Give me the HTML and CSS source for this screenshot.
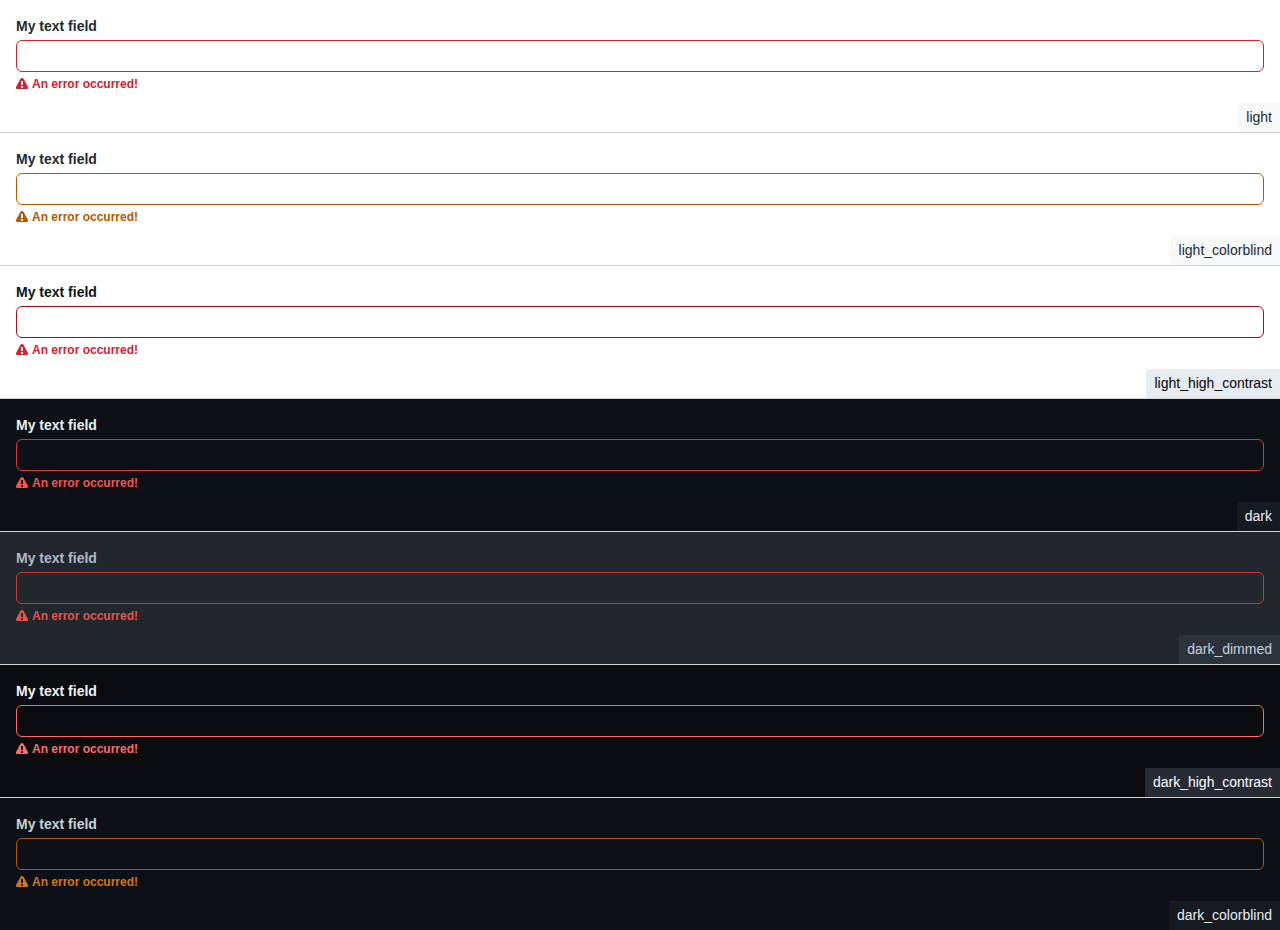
FILE: index.html
```html
<!DOCTYPE html>
<html lang="en">
<head>
<meta charset="utf-8">
<meta name="viewport" content="width=device-width, initial-scale=1">
<title>Text field themes</title>
<link rel="stylesheet" href="styles.css">
</head>
<body>
<svg class="sprite" aria-hidden="true"><symbol id="alert" viewBox="0 0 12 12"><path fill-rule="evenodd" d="M4.4 1C5.1-.2 6.9-.2 7.6 1l4.25 7.8c.55 1.1-.1 2.2-1.2 2.2H1.35C.25 11-.4 9.9.15 8.8ZM5 3v4h2V3Zm0 5v2h2V8Z"/></symbol></svg>
<main>
  <section class="theme light">
    <div class="field">
      <label class="label" for="f1">My text field</label>
      <input class="input" id="f1" type="text" aria-invalid="true" aria-describedby="e1">
      <p class="error" id="e1"><svg class="icon" aria-hidden="true"><use href="#alert"/></svg><span>An error occurred!</span></p>
    </div>
    <div class="tag">light</div>
  </section>
  <section class="theme light-colorblind">
    <div class="field">
      <label class="label" for="f2">My text field</label>
      <input class="input" id="f2" type="text" aria-invalid="true" aria-describedby="e2">
      <p class="error" id="e2"><svg class="icon" aria-hidden="true"><use href="#alert"/></svg><span>An error occurred!</span></p>
    </div>
    <div class="tag">light_colorblind</div>
  </section>
  <section class="theme light-high-contrast">
    <div class="field">
      <label class="label" for="f3">My text field</label>
      <input class="input" id="f3" type="text" aria-invalid="true" aria-describedby="e3">
      <p class="error" id="e3"><svg class="icon" aria-hidden="true"><use href="#alert"/></svg><span>An error occurred!</span></p>
    </div>
    <div class="tag">light_high_contrast</div>
  </section>
  <section class="theme dark">
    <div class="field">
      <label class="label" for="f4">My text field</label>
      <input class="input" id="f4" type="text" aria-invalid="true" aria-describedby="e4">
      <p class="error" id="e4"><svg class="icon" aria-hidden="true"><use href="#alert"/></svg><span>An error occurred!</span></p>
    </div>
    <div class="tag">dark</div>
  </section>
  <section class="theme dark-dimmed">
    <div class="field">
      <label class="label" for="f5">My text field</label>
      <input class="input" id="f5" type="text" aria-invalid="true" aria-describedby="e5">
      <p class="error" id="e5"><svg class="icon" aria-hidden="true"><use href="#alert"/></svg><span>An error occurred!</span></p>
    </div>
    <div class="tag">dark_dimmed</div>
  </section>
  <section class="theme dark-high-contrast">
    <div class="field">
      <label class="label" for="f6">My text field</label>
      <input class="input" id="f6" type="text" aria-invalid="true" aria-describedby="e6">
      <p class="error" id="e6"><svg class="icon" aria-hidden="true"><use href="#alert"/></svg><span>An error occurred!</span></p>
    </div>
    <div class="tag">dark_high_contrast</div>
  </section>
  <section class="theme dark-colorblind">
    <div class="field">
      <label class="label" for="f7">My text field</label>
      <input class="input" id="f7" type="text" aria-invalid="true" aria-describedby="e7">
      <p class="error" id="e7"><svg class="icon" aria-hidden="true"><use href="#alert"/></svg><span>An error occurred!</span></p>
    </div>
    <div class="tag">dark_colorblind</div>
  </section>
</main>
</body>
</html>
```
FILE: styles.css
```css
* {
  box-sizing: border-box;
}

body {
  margin: 0;
  font-family: "Liberation Sans", Arial, sans-serif;
  font-size: 14px;
  line-height: 21px;
}

.sprite {
  display: none;
}

.theme {
  display: flex;
  flex-direction: column;
  background: var(--bg);
  color: var(--fg);
  border-bottom: 1px solid #d3d3d3;
}

.theme:last-child {
  border-bottom: 0;
}

.field {
  display: flex;
  flex-direction: column;
  gap: 4px;
  padding: 16px 16px 11px;
}

.label {
  align-self: flex-start;
  font-weight: 700;
  line-height: 20px;
}

.input {
  width: 100%;
  height: 32px;
  padding: 0 12px;
  border: 1px solid var(--border);
  border-radius: 6px;
  background: var(--bg);
  color: inherit;
  font: inherit;
}

.error {
  display: flex;
  align-items: center;
  gap: 4px;
  margin: 0;
  color: var(--danger);
  font-size: 12px;
  font-weight: 700;
  line-height: 16px;
}

.icon {
  width: 12px;
  height: 12px;
  fill: currentColor;
}

.tag {
  align-self: flex-end;
  padding: 4px 8px;
  background: var(--tag);
  color: var(--tag-fg);
}

.light {
  --bg: #ffffff;
  --fg: #24292f;
  --border: #cf222e;
  --danger: #cf222e;
  --tag: #f6f8fa;
  --tag-fg: #24292f;
}

.light-colorblind {
  --bg: #ffffff;
  --fg: #24292f;
  --border: #b35900;
  --danger: #b35900;
  --tag: #f6f8fa;
  --tag-fg: #24292f;
}

.light-high-contrast {
  --bg: #ffffff;
  --fg: #0e1116;
  --border: #a0111f;
  --danger: #d1242f;
  --tag: #e7ecf0;
  --tag-fg: #010409;
}

.dark {
  --bg: #0d1117;
  --fg: #e6edf3;
  --border: #da3633;
  --danger: #f85149;
  --tag: #161b22;
  --tag-fg: #e6edf3;
}

.dark-dimmed {
  --bg: #22272e;
  --fg: #adbac7;
  --border: #c93c37;
  --danger: #e5534b;
  --tag: #2d333b;
  --tag-fg: #c5d1de;
}

.dark-high-contrast {
  --bg: #0a0c10;
  --fg: #f0f3f6;
  --border: #ff6a69;
  --danger: #ff6a69;
  --tag: #272b33;
  --tag-fg: #ffffff;
}

.dark-colorblind {
  --bg: #0d1117;
  --fg: #c9d1d9;
  --border: #b35900;
  --danger: #d47616;
  --tag: #161b22;
  --tag-fg: #e6edf3;
}
```
